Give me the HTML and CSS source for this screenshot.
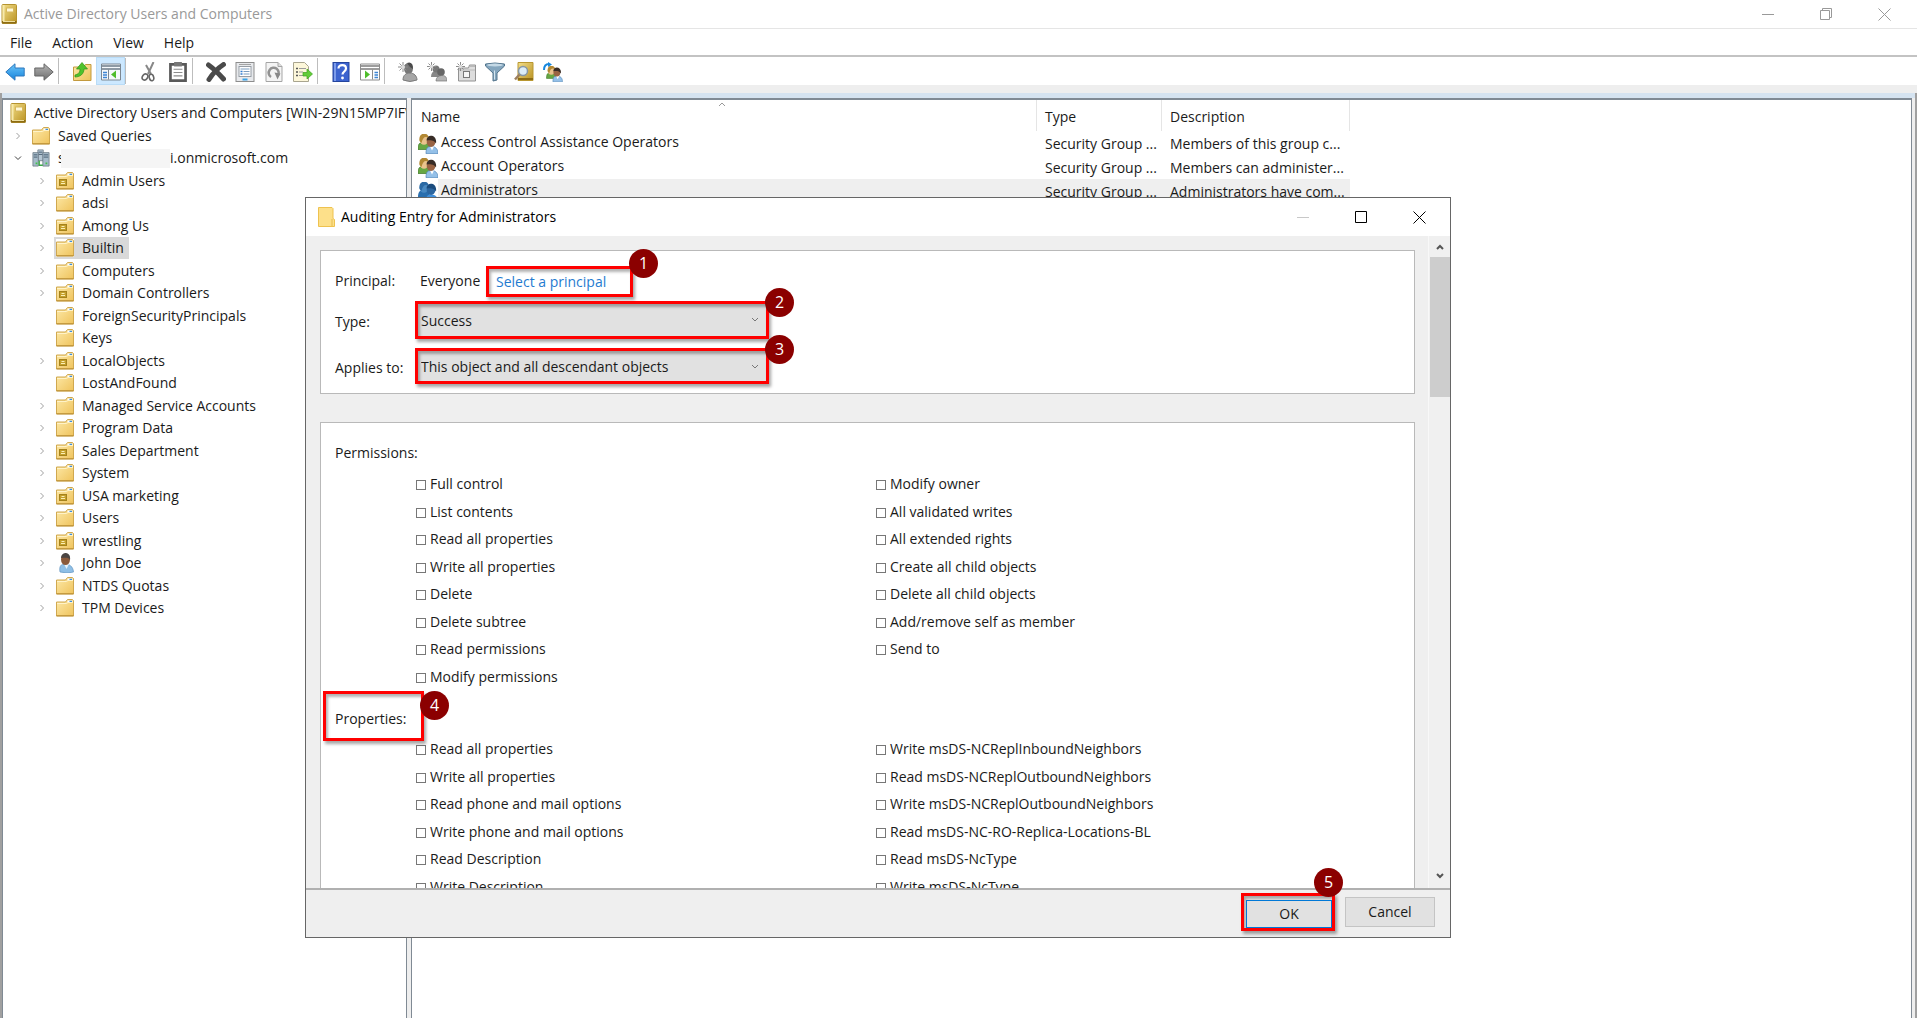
FILE: index.html
```html
<!DOCTYPE html>
<html lang="en">

<head>
    <meta charset="UTF-8">
    <meta name="viewport" content="width=device-width, initial-scale=1.0">
    <title>Active Directory Users and Computers</title>
    <link rel="stylesheet" href="styles.css">
</head>

<body>
    <!-- Icon shapes -->
    <svg class="sprite" aria-hidden="true">
        <defs>
            <linearGradient id="gold" x1="0" y1="0" x2="1" y2="1">
                <stop offset="0" stop-color="#fde9a8" />
                <stop offset="1" stop-color="#efc35c" />
            </linearGradient>
            <linearGradient id="bookFill" x1="0" y1="0" x2="1" y2="1">
                <stop offset="0" stop-color="#f3df8a" />
                <stop offset="1" stop-color="#b99120" />
            </linearGradient>
            <linearGradient id="blueFill" x1="0" y1="0" x2="0" y2="1">
                <stop offset="0" stop-color="#6cc6fa" />
                <stop offset="1" stop-color="#1583dc" />
            </linearGradient>
            <linearGradient id="greyFill" x1="0" y1="0" x2="0" y2="1">
                <stop offset="0" stop-color="#b5b5b5" />
                <stop offset="1" stop-color="#6e6e6e" />
            </linearGradient>
        </defs>
        <symbol id="book" viewBox="0 0 16 20">
            <rect x="1" y="0.5" width="14.5" height="19" rx="1" fill="url(#bookFill)" stroke="#b5932f" />
            <rect x="1.5" y="1" width="2" height="16" fill="#f7e9ab" />
            <rect x="5.5" y="4" width="7" height="4" fill="#fff8d8" stroke="#d6b75c" />
            <path d="M1 17h14.500v2.500H1z" fill="#8d6c14" />
            <path d="M2 17.500h12" stroke="#efe0a0" />
        </symbol>
        <symbol id="folder" viewBox="0 0 18 18">
            <path d="M.5 3h9l2-2.500h5l1 1v15.500H.5z" fill="url(#gold)" stroke="#d0a84f" />
            <path d="M11.500 2.500h5" stroke="#fff" stroke-width="2" />
            <path d="M13.500 2.500h2.500" stroke="#3b8ede" stroke-width="1.500" />
            <path d="M1 4.500h9.500l1.500-1h5" fill="none" stroke="#fff3c8" />
            <path d="M.5 16.800h17" stroke="#b98d33" />
        </symbol>
        <symbol id="ou" viewBox="0 0 18 18">
            <use href="#folder" />
            <rect x="3.500" y="7.500" width="7" height="6" fill="#c5a02c" stroke="#a5821c" />
            <path d="M5.500 9.500h3M5 11.500h4" stroke="#fbeeb5" />
        </symbol>
        <symbol id="domain" viewBox="0 0 20 20">
            <g stroke="#65727e" stroke-width=".8">
                <path d="M6.500 1h6v12h-6z" fill="#b4c6d3" />
                <path d="M1 4h6v15H1z" fill="#a5bac9" />
                <path d="M12 4h7v15h-7z" fill="#a5bac9" />
            </g>
            <path d="M7.500 3.500h4M2 6.500h4M2 9h4M13 6.500h5M13 9h5M7.500 6h4" stroke="#40566a" />
            <path d="M8 13v5h4" fill="none" stroke="#39a845" stroke-width="1.500" />
            <path d="M4 15h2v2H4zM15 15h2v2h-2z" fill="#43c54b" />
        </symbol>
        <symbol id="user" viewBox="0 0 18 20">
            <path d="M4 19c-1-6 1-8 5-8s8 2 8.500 8q-6 2-13.500 0z" fill="#8fbfe6" stroke="#6596c1" stroke-width=".7" />
            <path d="M8 11l2.500 5 2.500-5z" fill="#e8f3fb" />
            <ellipse cx="9.500" cy="6.500" rx="4.500" ry="5.500" fill="#8a5a3b" />
            <path d="M5 5c0-7 10.500-7 9 2-1-3-5-2-9-2z" fill="#4a4542" />
        </symbol>
        <symbol id="group" viewBox="0 0 20 20">
            <path d="M0 15.500C0 9 2 8.500 5.500 8.500S12 10 12 15.500z" fill="#66a743" stroke="#3c7526" stroke-width=".7" />
            <ellipse cx="6" cy="5.500" rx="4.300" ry="5.300" fill="#eac38d" />
            <path d="M1.500 7C0-2 10-2.500 11 4 7 2 5 3 3.500 9z" fill="#b28834" />
            <path d="M8 19.700c0-6.500 2-7.200 5.500-7.200s6.500 2 6.500 7.200z" fill="#94c0e8" stroke="#4f84b6" stroke-width=".7" />
            <path d="M12 12.500l2 4 2-4z" fill="#fff" />
            <ellipse cx="13" cy="8" rx="4.300" ry="5" fill="#996343" />
            <path d="M8.500 6.500c0-7 11-6.500 9.500 3-2-4-6-3.500-9.500-3z" fill="#382c26" />
        </symbol>
        <symbol id="group-selected" viewBox="0 0 20 20">
            <path d="M0 15.500C0 9 2 8.500 5.500 8.500S12 10 12 15.500z" fill="#2a6fae" />
            <ellipse cx="6" cy="5.500" rx="4.300" ry="5.300" fill="#4a8ac2" />
            <path d="M1.500 7C0-2 10-2.500 11 4 7 2 5 3 3.500 9z" fill="#2b6aa5" />
            <path d="M8 19.700c0-6.500 2-7.200 5.500-7.200s6.500 2 6.500 7.200z" fill="#3f8fdc" />
            <ellipse cx="13" cy="8" rx="4.300" ry="5" fill="#2c66a0" />
            <path d="M8.500 6.500c0-7 11-6.500 9.500 3-2-4-6-3.500-9.500-3z" fill="#1a4b7d" />
        </symbol>
        <symbol id="arrow" viewBox="0 0 20 18">
            <path d="M.8 9L10 .8V5h9.200v8H10v4.200z" />
        </symbol>
        <symbol id="up" viewBox="0 0 20 20">
            <path d="M1.500 5h10l2-2.500H19v16H1.500z" fill="url(#gold)" stroke="#c39a3e" />
            <path d="M3 13c4-1 5-3 5-6H4.500L10 .5 15.500 7H12c0 5-4 8-9 8z" fill="#4fc22c" stroke="#2f9417" stroke-width=".7" />
        </symbol>
        <symbol id="tree-view" viewBox="0 0 20 17">
            <path d="M.5.500h19v16H.5z" fill="#f5f9fc" stroke="#7c8791" />
            <path d="M1 2.500h18M1 5.500h18" stroke="#8e9aa5" stroke-width="2" />
            <path d="M2 9h4M2 11.500h4M2 14h4" stroke="#3e85d2" stroke-width="1.500" />
            <path d="M7.500 6v10" stroke="#7c8791" />
            <path d="M15 7v8l-5-4z" fill="#4fbd2c" />
        </symbol>
        <symbol id="action-view" viewBox="0 0 20 17">
            <path d="M.5.500h19v16H.5z" fill="#fff" stroke="#8c8c8c" />
            <path d="M1 2.500h18M1 5.500h18" stroke="#9c9c9c" stroke-width="2" />
            <path d="M14.500 9H18M14.500 11.500H18M14.500 14H18" stroke="#3e85d2" stroke-width="1.500" />
            <path d="M12.500 6v10" stroke="#8c8c8c" />
            <path d="M5 7v8l5-4z" fill="#4fbd2c" />
        </symbol>
        <symbol id="cut" viewBox="0 0 16 20">
            <path d="M12.500 0L7 12M5 3l5 9" stroke="#888" stroke-width="2" fill="none" />
            <ellipse cx="4" cy="15" rx="2.500" ry="3.300" transform="rotate(35 4 15)" fill="none" stroke="#666" stroke-width="1.600" />
            <ellipse cx="10.500" cy="15.500" rx="2.200" ry="3.300" transform="rotate(-15 10.500 15.500)" fill="none" stroke="#666" stroke-width="1.600" />
        </symbol>
        <symbol id="paste" viewBox="0 0 16 18">
            <path d="M1.200 2.200h13.600v14.600H1.200z" fill="#fff" stroke="#595959" stroke-width="2.400" />
            <path d="M4.500 0h7v4h-7z" fill="#777" />
            <path d="M4 6.500h8M4 9.500h8M4 12.500h8" stroke="#8d8d8d" />
        </symbol>
        <symbol id="delete" viewBox="0 0 20 20">
            <path d="M2.500 3q7 5 15 14M17.500 2.500Q9 8 3 17.500" stroke="#4a4a4a" stroke-width="5" stroke-linecap="round" fill="none" />
        </symbol>
        <symbol id="properties" viewBox="0 0 19 20">
            <rect x=".5" y=".5" width="18" height="19" fill="#e7e9ec" stroke="#8d8d8d" />
            <rect x="3.500" y="4.500" width="12" height="10" fill="#fff" stroke="#969da5" />
            <path d="M3.500 2.500h12" stroke="#a4a4a4" />
            <path d="M5 7h9M8 9.500h6M8 12h6" stroke="#7b9dc0" />
            <path d="M5 9.500h2M5 12h2" stroke="#2f7bd0" stroke-width="1.500" />
            <path d="M7 17.500h5" stroke="#39a3e8" stroke-width="2" />
        </symbol>
        <symbol id="refresh" viewBox="0 0 17 20">
            <path d="M.5.500h12l4 4v15H.5z" fill="#f4f4f4" stroke="#a5a5a5" />
            <path d="M12.500.500v4h4" fill="#ddd" stroke="#a5a5a5" />
            <path d="M5.500 15a5 5 0 1 1 6.500-1" fill="none" stroke="#929292" stroke-width="2.500" />
            <path d="M9 10.500l6 1-3 6z" fill="#888" />
        </symbol>
        <symbol id="export" viewBox="0 0 20 20">
            <path d="M.5.500h11l4 4v15H.5z" fill="#fdf7da" stroke="#a9a58f" />
            <path d="M3 6.500h2M3 10h2M3 13.500h2" stroke="#555" stroke-width="1.500" />
            <path d="M6 6.500h7M6 10h4M6 13.500h4" stroke="#9b9b9b" />
            <path d="M10 10.500h4V7l5.500 5-5.500 5v-3h-4z" fill="#62cc38" stroke="#3ca01c" stroke-width=".7" />
        </symbol>
        <symbol id="help-book" viewBox="0 0 17 20">
            <rect x=".5" y=".5" width="16" height="19" fill="#3c63cf" stroke="#24449d" />
            <path d="M2.500 1v18" stroke="#7c9bea" stroke-width="2" />
            <path d="M6 6.500c0-4.500 7.500-4.500 7.500 0 0 3-3.500 3-3.500 6" fill="none" stroke="#fff" stroke-width="2.200" />
            <circle cx="10" cy="16" r="1.400" fill="#fff" />
        </symbol>
        <symbol id="new-user" viewBox="0 0 20 20">
            <ellipse cx="10.500" cy="6.500" rx="4.500" ry="5.500" fill="#777" />
            <path d="M9 1q6-2 6 6l-3-2z" fill="#4b4b4b" />
            <path d="M5 18c0-5 3-7 7-7s7 3 7 7q-7 3-14 0z" fill="#a6a6a6" stroke="#7b7b7b" />
            <path d="M5 0v10M0 5h10M1.500 1.500l7 7M8.500 1.500l-7 7" stroke="#8b8b8b" />
            <circle cx="5" cy="5" r="2" fill="#ddd" />
        </symbol>
        <symbol id="new-group" viewBox="0 0 20 20">
            <path d="M4 15q0-6 5-6t5 6z" fill="#888" />
            <circle cx="9" cy="7" r="3.500" fill="#777" />
            <path d="M9 19q0-5 5.500-5.500T20 19z" fill="#b3b3b3" stroke="#777" stroke-width=".7" />
            <circle cx="14" cy="10" r="3.800" fill="#666" />
            <path d="M4.500 0v9M0 4.500h9M1.500 1.500l6 6M7.500 1.500l-6 6" stroke="#8b8b8b" />
            <circle cx="4.500" cy="4.500" r="1.800" fill="#ddd" />
        </symbol>
        <symbol id="new-ou" viewBox="0 0 20 20">
            <path d="M2.500 6h10l1-3h6v16h-17z" fill="#ddd" stroke="#929292" />
            <path d="M14 4.500h5M3 8h16" stroke="#b9b9b9" />
            <rect x="7.500" y="9.500" width="6" height="6" fill="#f5f5f5" stroke="#777" />
            <path d="M4.500 0v9M0 4.500h9M1.500 1.500l6 6M7.500 1.500l-6 6" stroke="#8b8b8b" />
            <circle cx="4.500" cy="4.500" r="1.800" fill="#ddd" />
        </symbol>
        <symbol id="funnel" viewBox="0 0 20 19">
            <path d="M.5 1.500Q10-.5 19.500 1.500v2L12 10.500v7l-4 1v-8L.5 3.500z" fill="#84a6be" stroke="#52748c" />
            <ellipse cx="10" cy="2.500" rx="8" ry="1.500" fill="#c4d9e6" />
            <path d="M9.500 8v9" stroke="#d5e6f0" />
        </symbol>
        <symbol id="find" viewBox="0 0 20 20">
            <path d="M4 .5h15v18H4z" fill="url(#bookFill)" stroke="#b99731" />
            <path d="M4 17h15" stroke="#8d6c14" stroke-width="2" />
            <circle cx="9" cy="9" r="4.500" fill="#dcedf8" stroke="#8797a4" stroke-width="1.500" />
            <path d="M5.500 12.500L1 17.500" stroke="#9c7f61" stroke-width="2.500" />
        </symbol>
        <symbol id="add-group" viewBox="0 0 20 20">
            <svg x="3" y="4" width="17" height="16"><use href="#group" /></svg>
            <path d="M1 8q0-6 5-6" fill="none" stroke="#1687dd" stroke-width="2" />
            <path d="M5 0v5l4-2.500z" fill="#1687dd" />
        </symbol>
        <symbol id="plain-folder" viewBox="0 0 17 20">
            <path d="M.5.500h13.500l1 1v10l1.500 1v7H.5z" fill="#fde08a" stroke="#eec24f" />
            <path d="M14 12v7" stroke="#e6bd50" />
        </symbol>
        <symbol id="minimize" viewBox="0 0 13 13"><path d="M0 6.500h12" /></symbol>
        <symbol id="maximize" viewBox="0 0 13 13"><path d="M.5.500h11v11H.5z" /></symbol>
        <symbol id="restore" viewBox="0 0 13 13"><path d="M.5 2.500h9v9h-9zM2.500 2.500v-2h9v9h-2" /></symbol>
        <symbol id="close" viewBox="0 0 13 13"><path d="M.5.500l12 12M12.500.500l-12 12" /></symbol>
        <symbol id="chevron" viewBox="0 0 8 8"><path d="M2.500 1l3 3-3 3" /></symbol>
        <symbol id="caret-up" viewBox="0 0 8 6"><path d="M1 5l3-3 3 3" /></symbol>
        <symbol id="caret-down" viewBox="0 0 8 6"><path d="M1 1l3 3 3-3" /></symbol>
    </svg>

    <header class="titlebar">
        <svg class="app-icon"><use href="#book" /></svg>
        <h1>Active Directory Users and Computers</h1>
        <div class="window-buttons">
            <button aria-label="Minimize"><svg><use href="#minimize" /></svg></button>
            <button aria-label="Restore"><svg><use href="#restore" /></svg></button>
            <button aria-label="Close"><svg><use href="#close" /></svg></button>
        </div>
    </header>

    <nav class="menubar">
        <a href="#">File</a>
        <a href="#">Action</a>
        <a href="#">View</a>
        <a href="#">Help</a>
    </nav>

    <div class="toolbar">
        <button aria-label="Back"><svg class="back"><use href="#arrow" /></svg></button>
        <button aria-label="Forward"><svg class="forward"><use href="#arrow" /></svg></button>
        <span class="separator"></span>
        <button aria-label="Up one level"><svg><use href="#up" /></svg></button>
        <button class="active" aria-label="Show console tree"><svg><use href="#tree-view" /></svg></button>
        <span class="separator"></span>
        <button aria-label="Cut"><svg><use href="#cut" /></svg></button>
        <button aria-label="Paste"><svg><use href="#paste" /></svg></button>
        <span class="separator"></span>
        <button aria-label="Delete"><svg><use href="#delete" /></svg></button>
        <button aria-label="Properties"><svg><use href="#properties" /></svg></button>
        <button aria-label="Refresh"><svg><use href="#refresh" /></svg></button>
        <button aria-label="Export list"><svg><use href="#export" /></svg></button>
        <span class="separator"></span>
        <button aria-label="Help"><svg><use href="#help-book" /></svg></button>
        <button aria-label="Show action pane"><svg><use href="#action-view" /></svg></button>
        <span class="separator"></span>
        <button aria-label="New user"><svg><use href="#new-user" /></svg></button>
        <button aria-label="New group"><svg><use href="#new-group" /></svg></button>
        <button aria-label="New organizational unit"><svg><use href="#new-ou" /></svg></button>
        <button aria-label="Filter"><svg><use href="#funnel" /></svg></button>
        <button aria-label="Find"><svg><use href="#find" /></svg></button>
        <button aria-label="Add to group"><svg><use href="#add-group" /></svg></button>
    </div>

    <main class="workspace">
        <aside class="pane tree-pane">
            <ul class="tree">
                <li class="root"><svg class="app-icon"><use href="#book" /></svg><span>Active Directory Users and Computers [WIN-29N15MP7IFV]</span></li>
                <li class="top"><svg class="chevron"><use href="#chevron" /></svg><svg class="icon"><use href="#folder" /></svg><span>Saved Queries</span></li>
                <li class="top open"><svg class="chevron"><use href="#chevron" /></svg><svg class="icon domain"><use href="#domain" /></svg><span class="domain-name"><span class="first">s</span><span class="redacted"></span>i.onmicrosoft.com</span></li>
                <li><svg class="chevron"><use href="#chevron" /></svg><svg class="icon"><use href="#ou" /></svg><span>Admin Users</span></li>
                <li><svg class="chevron"><use href="#chevron" /></svg><svg class="icon"><use href="#folder" /></svg><span>adsi</span></li>
                <li><svg class="chevron"><use href="#chevron" /></svg><svg class="icon"><use href="#ou" /></svg><span>Among Us</span></li>
                <li class="selected"><svg class="chevron"><use href="#chevron" /></svg><svg class="icon"><use href="#folder" /></svg><span>Builtin</span></li>
                <li><svg class="chevron"><use href="#chevron" /></svg><svg class="icon"><use href="#folder" /></svg><span>Computers</span></li>
                <li><svg class="chevron"><use href="#chevron" /></svg><svg class="icon"><use href="#ou" /></svg><span>Domain Controllers</span></li>
                <li class="leaf"><svg class="icon"><use href="#folder" /></svg><span>ForeignSecurityPrincipals</span></li>
                <li class="leaf"><svg class="icon"><use href="#folder" /></svg><span>Keys</span></li>
                <li><svg class="chevron"><use href="#chevron" /></svg><svg class="icon"><use href="#ou" /></svg><span>LocalObjects</span></li>
                <li class="leaf"><svg class="icon"><use href="#folder" /></svg><span>LostAndFound</span></li>
                <li><svg class="chevron"><use href="#chevron" /></svg><svg class="icon"><use href="#folder" /></svg><span>Managed Service Accounts</span></li>
                <li><svg class="chevron"><use href="#chevron" /></svg><svg class="icon"><use href="#folder" /></svg><span>Program Data</span></li>
                <li><svg class="chevron"><use href="#chevron" /></svg><svg class="icon"><use href="#ou" /></svg><span>Sales Department</span></li>
                <li><svg class="chevron"><use href="#chevron" /></svg><svg class="icon"><use href="#folder" /></svg><span>System</span></li>
                <li><svg class="chevron"><use href="#chevron" /></svg><svg class="icon"><use href="#ou" /></svg><span>USA marketing</span></li>
                <li><svg class="chevron"><use href="#chevron" /></svg><svg class="icon"><use href="#folder" /></svg><span>Users</span></li>
                <li><svg class="chevron"><use href="#chevron" /></svg><svg class="icon"><use href="#ou" /></svg><span>wrestling</span></li>
                <li><svg class="chevron"><use href="#chevron" /></svg><svg class="icon person"><use href="#user" /></svg><span>John Doe</span></li>
                <li><svg class="chevron"><use href="#chevron" /></svg><svg class="icon"><use href="#folder" /></svg><span>NTDS Quotas</span></li>
                <li><svg class="chevron"><use href="#chevron" /></svg><svg class="icon"><use href="#folder" /></svg><span>TPM Devices</span></li>
            </ul>
        </aside>

        <section class="pane list-pane">
            <table class="objects">
                <thead>
                    <tr>
                        <th class="name">Name<svg class="sort"><use href="#caret-up" /></svg></th>
                        <th class="type">Type</th>
                        <th class="description">Description</th>
                    </tr>
                </thead>
                <tbody>
                    <tr>
                        <td><svg><use href="#group" /></svg>Access Control Assistance Operators</td>
                        <td>Security Group ...</td>
                        <td>Members of this group c...</td>
                    </tr>
                    <tr>
                        <td><svg><use href="#group" /></svg>Account Operators</td>
                        <td>Security Group ...</td>
                        <td>Members can administer...</td>
                    </tr>
                    <tr class="selected">
                        <td><svg><use href="#group-selected" /></svg>Administrators</td>
                        <td>Security Group ...</td>
                        <td>Administrators have com...</td>
                    </tr>
                </tbody>
            </table>
        </section>
    </main>

    <!-- Auditing entry window -->
    <div class="dialog" role="dialog" aria-labelledby="dialogTitle">
        <div class="dialog-title">
            <svg class="dialog-icon"><use href="#plain-folder" /></svg>
            <h2 id="dialogTitle">Auditing Entry for Administrators</h2>
            <div class="window-buttons">
                <button aria-label="Minimize" disabled><svg><use href="#minimize" /></svg></button>
                <button aria-label="Maximize"><svg><use href="#maximize" /></svg></button>
                <button aria-label="Close"><svg><use href="#close" /></svg></button>
            </div>
        </div>

        <div class="dialog-body">
            <div class="dialog-content">
                <div class="panel entry">
                    <span>Principal:</span>
                    <div class="principal">
                        <span>Everyone</span>
                        <div class="mark mark-link"><a href="#">Select a principal</a><span class="badge">1</span></div>
                    </div>
                    <label for="type">Type:</label>
                    <div class="mark mark-select mark-type">
                        <select id="type">
                            <option>Success</option>
                        </select>
                        <svg class="caret"><use href="#caret-down" /></svg>
                        <span class="badge">2</span>
                    </div>
                    <label for="applies">Applies to:</label>
                    <div class="mark mark-select">
                        <select id="applies">
                            <option>This object and all descendant objects</option>
                        </select>
                        <svg class="caret"><use href="#caret-down" /></svg>
                        <span class="badge">3</span>
                    </div>
                </div>

                <div class="panel rights">
                    <h3>Permissions:</h3>
                    <div class="checks">
                        <ul>
                            <li><label><input type="checkbox">Full control</label></li>
                            <li><label><input type="checkbox">List contents</label></li>
                            <li><label><input type="checkbox">Read all properties</label></li>
                            <li><label><input type="checkbox">Write all properties</label></li>
                            <li><label><input type="checkbox">Delete</label></li>
                            <li><label><input type="checkbox">Delete subtree</label></li>
                            <li><label><input type="checkbox">Read permissions</label></li>
                            <li><label><input type="checkbox">Modify permissions</label></li>
                        </ul>
                        <ul>
                            <li><label><input type="checkbox">Modify owner</label></li>
                            <li><label><input type="checkbox">All validated writes</label></li>
                            <li><label><input type="checkbox">All extended rights</label></li>
                            <li><label><input type="checkbox">Create all child objects</label></li>
                            <li><label><input type="checkbox">Delete all child objects</label></li>
                            <li><label><input type="checkbox">Add/remove self as member</label></li>
                            <li><label><input type="checkbox">Send to</label></li>
                        </ul>
                    </div>
                    <div class="mark mark-heading">
                        <h3>Properties:</h3><span class="badge">4</span>
                    </div>
                    <div class="checks properties">
                        <ul>
                            <li><label><input type="checkbox">Read all properties</label></li>
                            <li><label><input type="checkbox">Write all properties</label></li>
                            <li><label><input type="checkbox">Read phone and mail options</label></li>
                            <li><label><input type="checkbox">Write phone and mail options</label></li>
                            <li><label><input type="checkbox">Read Description</label></li>
                            <li><label><input type="checkbox">Write Description</label></li>
                        </ul>
                        <ul>
                            <li><label><input type="checkbox">Write msDS-NCReplInboundNeighbors</label></li>
                            <li><label><input type="checkbox">Read msDS-NCReplOutboundNeighbors</label></li>
                            <li><label><input type="checkbox">Write msDS-NCReplOutboundNeighbors</label></li>
                            <li><label><input type="checkbox">Read msDS-NC-RO-Replica-Locations-BL</label></li>
                            <li><label><input type="checkbox">Read msDS-NcType</label></li>
                            <li><label><input type="checkbox">Write msDS-NcType</label></li>
                        </ul>
                    </div>
                </div>
            </div>
            <div class="scrollbar">
                <svg class="caret"><use href="#caret-up" /></svg>
                <div class="thumb"></div>
                <svg class="caret"><use href="#caret-down" /></svg>
            </div>
        </div>

        <div class="dialog-footer">
            <div class="mark mark-button"><button class="default">OK</button><span class="badge">5</span></div>
            <button>Cancel</button>
        </div>
    </div>
</body>

</html>
```
FILE: styles.css
```css
/* Reset and base styling */
* {
    margin: 0;
    padding: 0;
    box-sizing: border-box;
}

body {
    font-family: 'Segoe UI', 'Open Sans', 'Noto Sans', sans-serif;
    font-size: 14px;
    line-height: 20px;
    color: #1a1a1a;
    background: #ffffff;
    height: 100vh;
    overflow: hidden;
    display: flex;
    flex-direction: column;
}

h1,
h2,
h3 {
    font-size: inherit;
    font-weight: normal;
}

ul {
    list-style: none;
}

a {
    color: inherit;
    text-decoration: none;
}

button,
select {
    font: inherit;
    color: inherit;
    border: none;
    background: none;
}

svg {
    flex-shrink: 0;
}

.sprite {
    position: absolute;
    width: 0;
    height: 0;
}

.app-icon {
    width: 16px;
    height: 20px;
}

/* Title bar */
.titlebar {
    height: 29px;
    display: flex;
    align-items: center;
    gap: 7px;
    padding: 0 4px 0 1px;
    border-bottom: 1px solid #e5e5e5;
    color: #999999;
}

.window-buttons {
    margin-left: auto;
    display: flex;
}

.window-buttons button {
    width: 58px;
    height: 28px;
    display: flex;
    align-items: center;
    justify-content: center;
}

.window-buttons svg {
    width: 13px;
    height: 13px;
    fill: none;
    stroke: currentColor;
}

/* Menu */
.menubar {
    height: 28px;
    display: flex;
    align-items: center;
    gap: 20px;
    padding: 2px 0 0 10px;
    border-bottom: 2px solid #c3c3c3;
}

/* Toolbar */
.toolbar {
    height: 28px;
    display: flex;
    align-items: center;
}

.toolbar button {
    width: 29px;
    height: 28px;
    display: flex;
    align-items: center;
    justify-content: center;
    padding-top: 2px;
}

.toolbar svg {
    width: 20px;
    height: 20px;
}

.toolbar .active {
    background: #cce8ff;
    border: 1px solid #b9dcf7;
}

.toolbar .separator {
    width: 1px;
    height: 26px;
    margin: 0 8px 0 0;
    background: #bdbdbd;
}

.back {
    fill: url(#blueFill);
    stroke: #2e78bd;
}

.forward {
    fill: url(#greyFill);
    stroke: #666666;
    transform: scaleX(-1);
}

/* Tree and list panes */
.workspace {
    flex: 1;
    min-height: 0;
    display: flex;
    gap: 4px;
    margin-top: 8px;
    padding: 5px 3px 0 0;
    border-left: 2px solid #a0a0a0;
    border-right: 2px solid #a0a0a0;
    background: #eeeeee;
    box-shadow: inset 0 5px #d5e3f0, 0 -8px #eeeeee;
}

.pane {
    background: #ffffff;
    border: 1px solid #808a94;
    border-top-width: 2px;
    border-bottom: none;
    overflow: hidden;
}

.tree-pane {
    width: 405px;
    padding: 2px 0 0 7px;
}

.tree li {
    height: 22px;
    display: flex;
    align-items: center;
    gap: 3px;
    padding-left: 28px;
    white-space: nowrap;
}

.tree li:nth-child(even) {
    height: 23px;
}

.tree .root {
    gap: 8px;
    padding-left: 0;
}

.tree .top {
    padding-left: 4px;
}

.tree .leaf {
    padding-left: 46px;
}

.tree .chevron {
    width: 8px;
    height: 8px;
    margin-right: 7px;
    fill: none;
    stroke: #a0a0a0;
}

.tree .open .chevron {
    transform: rotate(90deg);
    stroke: #404040;
}

.tree .icon {
    width: 18px;
    height: 18px;
}

.tree .person {
    height: 20px;
}

.tree .icon + span {
    height: 22px;
    line-height: 22px;
    padding: 0 5px;
}

.tree .selected .icon {
    box-shadow: 0 0 0 2px #d9d9d9;
}

.tree .selected span {
    background: #d9d9d9;
    margin-left: -3px;
    padding-left: 8px;
}

.domain-name {
    display: flex;
    align-items: center;
}

.domain-name .first {
    width: 3px;
    overflow: hidden;
}

.redacted {
    width: 109px;
    height: 19px;
    background: #f5f5f5;
}

.list-pane {
    flex: 1;
}

.objects {
    table-layout: fixed;
    width: 938px;
    border-collapse: separate;
    border-spacing: 0;
    white-space: nowrap;
}

.objects th {
    height: 31px;
    padding: 3px 8px 0;
    font-weight: normal;
    text-align: left;
    border-right: 1px solid #e5e5e5;
}

.objects th:first-child {
    padding-left: 9px;
}

.objects .name {
    position: relative;
}

.objects .type {
    width: 125px;
}

.objects .description {
    width: 188px;
}

.objects .sort {
    position: absolute;
    top: 1px;
    left: 49%;
    width: 8px;
    height: 6px;
    fill: none;
    stroke: #999999;
}

.objects td {
    height: 24px;
    padding: 2px 8px 0;
}

.objects td:first-child {
    padding: 0 0 0 6px;
}

.objects td svg {
    width: 20px;
    height: 20px;
    margin-right: 3px;
    vertical-align: middle;
}

.objects .selected td {
    background: #efefef;
}

.objects .selected td:first-child {
    background: linear-gradient(to right, #ffffff 26px, #efefef 26px);
}

/* Auditing entry dialog */
.dialog {
    position: absolute;
    top: 197px;
    left: 305px;
    width: 1146px;
    height: 741px;
    display: flex;
    flex-direction: column;
    background: #efefef;
    border: 1px solid #666666;
}

.dialog-title {
    height: 38px;
    display: flex;
    align-items: center;
    gap: 6px;
    padding: 0 2px 0 12px;
    background: #ffffff;
    color: #000000;
}

.dialog-title button:disabled {
    color: #c8c8c8;
}

.dialog-icon {
    width: 17px;
    height: 20px;
}

.dialog-body {
    flex: 1;
    min-height: 0;
    display: flex;
    border-bottom: 2px solid #b0b0b0;
}

.dialog-content {
    flex: 1;
    overflow: hidden;
    display: flex;
    flex-direction: column;
    gap: 28px;
    padding: 14px 13px 0 14px;
}

.panel {
    flex-shrink: 0;
    background: #ffffff;
    border: 1px solid #b9b9b9;
}

.entry {
    display: grid;
    grid-template-columns: 80px 354px;
    grid-template-rows: 40px 38px 54px;
    align-items: center;
    padding: 10px 14px 0;
}

.entry label {
    padding-top: 4px;
}

.principal {
    display: flex;
    align-items: center;
    justify-content: space-between;
    padding: 0 136px 0 5px;
}

/* Numbered red call-outs */
.mark {
    position: relative;
    border: 3px solid #ff0000;
    box-shadow: 2px 3px 3px rgba(0, 0, 0, 0.35), inset 2px 3px 3px rgba(0, 0, 0, 0.3);
}

.badge {
    position: absolute;
    top: -20px;
    right: -28px;
    width: 29px;
    height: 29px;
    border-radius: 50%;
    background: #8b0000;
    color: #ffffff;
    font-size: 16px;
    line-height: 29px;
    text-align: center;
}

.mark-link {
    width: 147px;
    padding: 3px 0 3px 7px;
    line-height: 19px;
    color: #1f7bd0;
}

.mark-select {
    height: 36px;
    background: #e1e1e1;
}

.mark-select select {
    width: 100%;
    height: 100%;
    padding: 2px 0 0 3px;
    appearance: none;
}

.mark-select .caret {
    position: absolute;
    top: 13px;
    right: 7px;
}

.caret {
    width: 8px;
    height: 6px;
    fill: none;
    stroke: #777777;
}

.mark-select .badge {
    top: -16px;
}

.mark-type {
    height: 38px;
}

.rights {
    padding: 13px 2px 0;
}

.rights > h3 {
    height: 34px;
    line-height: 34px;
    padding-left: 12px;
}

.mark-heading {
    width: 101px;
    height: 50px;
    padding-left: 9px;
    margin-top: 1px;
    line-height: 50px;
}

.mark-heading .badge {
    top: -3px;
}

.checks {
    display: grid;
    grid-template-columns: 460px 1fr;
    padding-left: 93px;
}

.checks.properties {
    margin-top: -6px;
}

.checks li {
    height: 27px;
    display: flex;
    align-items: center;
}

.checks li:nth-child(odd) {
    height: 28px;
}

.checks label {
    display: flex;
    align-items: center;
    gap: 4px;
}

.checks input {
    appearance: none;
    width: 10px;
    height: 10px;
    margin-top: 2px;
    border: 1px solid #777777;
    background: #ffffff;
}

.scrollbar {
    width: 22px;
    display: flex;
    flex-direction: column;
    align-items: center;
    padding: 8px 0 9px;
    background: #f0f0f0;
    border-left: 1px solid #f8f8f8;
}

.thumb {
    width: 20px;
    height: 140px;
    margin: 7px 0 auto;
    background: #cdcdcd;
}

.scrollbar .caret {
    stroke: #555555;
    stroke-width: 2;
}

.dialog-footer {
    height: 47px;
    display: flex;
    align-items: center;
    justify-content: flex-end;
    gap: 10px;
    padding: 0 15px 3px 0;
}

.dialog-footer button {
    width: 90px;
    height: 30px;
    background: #e1e1e1;
    border: 1px solid #c4c4c4;
}

.mark-button {
    width: 94px;
    height: 38px;
    padding: 4px 0 0 2px;
}

.mark-button .default {
    width: 86px;
    height: 28px;
    border-color: #0078d7;
}

.mark-button .badge {
    top: -28px;
    right: -11px;
}
```
